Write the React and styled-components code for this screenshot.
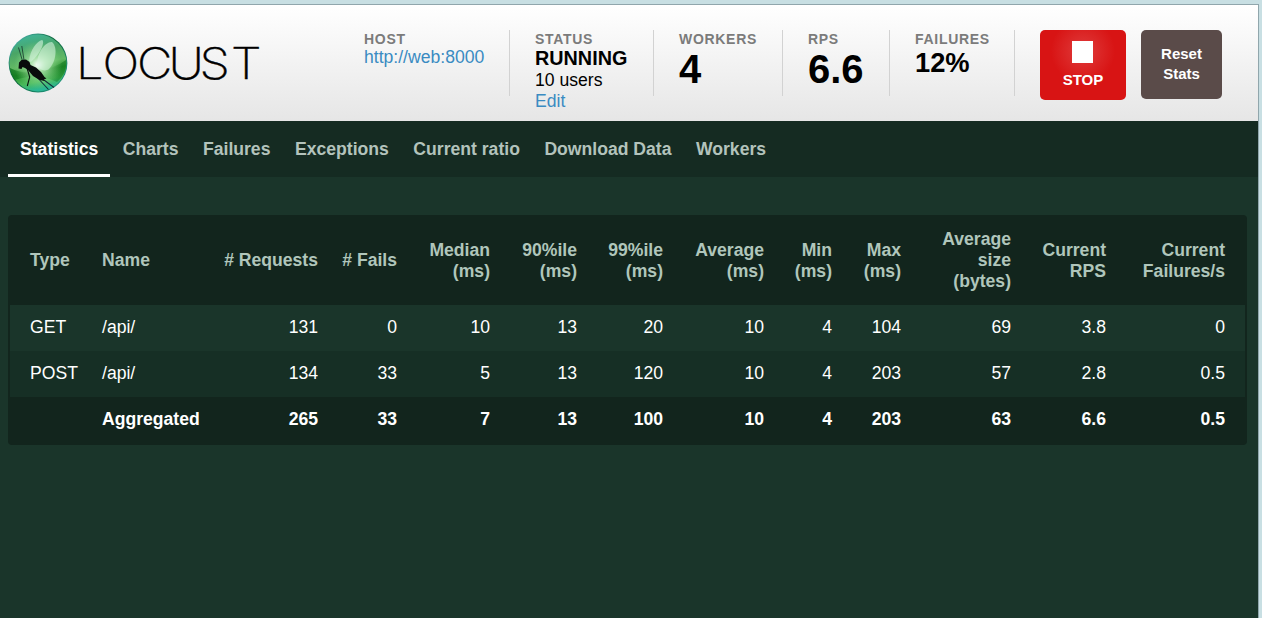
import React from "react";
import styled, { createGlobalStyle, css } from "styled-components";

const GlobalStyle = createGlobalStyle`
  * { box-sizing: border-box; }
  body {
    margin: 0;
    background: #c8dfe3;
    font-family: "Liberation Sans", Arial, sans-serif;
    font-size: 17.6px;
    line-height: 21px;
  }
`;

const Frame = styled.div`
  margin-top: 4px;
  width: 1259px;
  height: 614px;
  border-top: 1px solid #90a6ac;
  border-right: 1px solid #90a6ac;
  background: #1a352a;
  overflow: hidden;
`;

const Header = styled.header`
  display: flex;
  align-items: flex-start;
  height: 116px;
  padding: 25px 36px 0 4px;
  background: linear-gradient(#ffffff, #e6e6e6);
`;

const Logo = styled.svg`
  display: block;
  flex: none;
  width: 260px;
  height: 70px;
  margin-top: -2px;
`;

const Wordmark = styled.text`
  font-family: Inter, "Liberation Sans", sans-serif;
  font-size: 43.5px;
  font-weight: 200;
  fill: #000;
  stroke: #000;
  stroke-width: 0.4px;
`;

const Stats = styled.div`
  display: flex;
  margin-left: 75px;
`;

const Stat = styled.div`
  width: ${(p) => p.$width}px;
  height: 66px;
  padding-left: 25px;
  border-right: 1px solid #d2d2d2;
  color: #000;
  white-space: nowrap;
`;

const Label = styled.div`
  height: 17px;
  font-size: 14px;
  line-height: 18px;
  font-weight: bold;
  letter-spacing: 0.7px;
  color: #7b7b7b;
`;

const Value = styled.div`
  font-size: ${(p) => p.$size}px;
  line-height: ${(p) => p.$line}px;
  font-weight: bold;
`;

const Link = styled.a`
  display: block;
  color: #3a8bc2;
  text-decoration: none;
`;

const button = css`
  display: flex;
  flex-direction: column;
  align-items: center;
  border: 0;
  border-radius: 5px;
  color: #fff;
  font: bold 15px/20px "Liberation Sans", Arial, sans-serif;
`;

const StopButton = styled.button`
  ${button}
  width: 86px;
  height: 70px;
  margin-left: 25px;
  padding: 11px 0 0;
  background: radial-gradient(circle at 50% 30%, #e03c3c 0, #d81414 32px);
`;

const StopIcon = styled.span`
  width: 21px;
  height: 22px;
  margin: 0 1px 7px 0;
  background: #fff;
`;

const ResetButton = styled.button`
  ${button}
  width: 81px;
  height: 69px;
  margin-left: 15px;
  padding: 14px 16px 0;
  background: #5a4b49;
`;

const Nav = styled.nav`
  display: flex;
  height: 56px;
  padding-left: 8px;
  background: #152b22;
`;

const Tab = styled.a`
  height: 56px;
  margin-right: 0.5px;
  padding: 18px 12px 0;
  border-bottom: 3px solid ${(p) => (p.$active ? "#fff" : "transparent")};
  color: ${(p) => (p.$active ? "#fff" : "#b3c3bc")};
  font-weight: bold;
  white-space: nowrap;
`;

const Panel = styled.main`
  width: 1239px;
  height: 230px;
  margin: 38px 0 0 8px;
  padding: 2px;
  border-radius: 4px;
  background: #12251d;
`;

const Table = styled.table`
  width: 1235px;
  table-layout: fixed;
  border-collapse: collapse;
`;

const Col = styled.col`
  width: ${(p) => p.$width}px;
`;

const cell = css`
  padding: 0 12px;
  text-align: ${(p) => (p.$left ? "left" : "right")};
  &:first-child { padding-left: 20px; }
  &:last-child { padding-right: 20px; }
`;

const HeadCell = styled.th`
  ${cell}
  height: 88px;
  padding-bottom: 1px;
  color: #b0c6bb;
  vertical-align: middle;
  white-space: pre-line;
`;

const Row = styled.tr`
  height: 46px;
  color: #fff;
  background: ${(p) => p.$bg};
  font-weight: ${(p) => (p.$bold ? "bold" : "normal")};
`;

const Cell = styled.td`
  ${cell}
  padding-bottom: 2px;
`;

const tabs = ["Statistics", "Charts", "Failures", "Exceptions", "Current ratio", "Download Data", "Workers"];

const columns = [
  ["Type", 80],
  ["Name", 122],
  ["# Requests", 118],
  ["# Fails", 79],
  ["Median\n(ms)", 93],
  ["90%ile\n(ms)", 87],
  ["99%ile\n(ms)", 86],
  ["Average\n(ms)", 101],
  ["Min\n(ms)", 68],
  ["Max\n(ms)", 69],
  ["Average\nsize\n(bytes)", 110],
  ["Current\nRPS", 95],
  ["Current\nFailures/s", 127],
];

const rows = [
  { bg: "#1a352a", cells: ["GET", "/api/", "131", "0", "10", "13", "20", "10", "4", "104", "69", "3.8", "0"] },
  { bg: "#162f25", cells: ["POST", "/api/", "134", "33", "5", "13", "120", "10", "4", "203", "57", "2.8", "0.5"] },
  { bg: "#12251d", bold: true, cells: ["", "Aggregated", "265", "33", "7", "13", "100", "10", "4", "203", "63", "6.6", "0.5"] },
];

function LocustLogo() {
  return (
    <Logo viewBox="0 0 260 70" aria-label="Locust">
      <defs>
        <linearGradient id="rim" x1="0" y1="0" x2="1" y2="1">
          <stop offset="0" stopColor="#5cc8c8" />
          <stop offset="0.45" stopColor="#0c6538" />
          <stop offset="1" stopColor="#25a392" />
        </linearGradient>
        <linearGradient id="ball" x1="0.2" y1="0" x2="0.4" y2="1">
          <stop offset="0" stopColor="#3fb59c" />
          <stop offset="0.3" stopColor="#4aa566" />
          <stop offset="0.55" stopColor="#62b964" />
          <stop offset="0.68" stopColor="#2c9430" />
          <stop offset="0.85" stopColor="#48b858" />
          <stop offset="1" stopColor="#2ab796" />
        </linearGradient>
        <radialGradient id="glow" cx="0.5" cy="0.54" r="0.46">
          <stop offset="0" stopColor="#ffffff" />
          <stop offset="0.3" stopColor="#c6f2c4" stopOpacity="0.75" />
          <stop offset="1" stopColor="#8ee08c" stopOpacity="0" />
        </radialGradient>
        <linearGradient id="shade" x1="0" y1="0" x2="1" y2="0">
          <stop offset="0" stopColor="#087018" stopOpacity="0.75" />
          <stop offset="0.5" stopColor="#087018" stopOpacity="0.1" />
          <stop offset="1" stopColor="#087018" stopOpacity="0.55" />
        </linearGradient>
      </defs>
      <circle cx="34" cy="35" r="29.4" fill="url(#rim)" />
      <circle cx="34" cy="35" r="28.4" fill="url(#ball)" />
      <path d="M6 40Q20 47 34 43Q51 40 62 32Q63 46 53 54Q34 44 11 52Q6 46 6 40Z" fill="url(#shade)" />
      <circle cx="34" cy="35" r="26" fill="url(#glow)" />
      <path d="M25 33C26 22 33 13 38 12C41 13 38 24 27 34Z" fill="#d5f4dd" fillOpacity="0.6" />
      <path d="M33 38C32 25 42 13 48 14C54 19 52 34 45 41C41 44 36 42 33 38Z" fill="#d5f4dd" fillOpacity="0.6" />
      <path d="M18.5 33L14.5 19.5M20 32L17.8 18" stroke="#14352b" strokeWidth="0.8" fill="none" />
      <path d="M23 40L25.7 49L23.3 58" stroke="#08120e" strokeWidth="1.1" fill="none" />
      <path d="M31 47L44.5 61.5M36 49L50 59.5" stroke="#12303a" strokeWidth="1.1" fill="none" />
      <path d="M15 34.5L17.5 32L22 31.5L25.5 34L26.5 37L32 39.5L37 44L40.5 49L42.5 50.5L39.5 51.5L41 53L35.5 52L29 48L24 42L21 40L18.5 39L17.5 41L14.5 40.5Z" fill="#080c0b" />
      <Wordmark
        transform="scale(1.12 1)"
        x="64.4 87.9 118.8 146.9 174.6 202.7"
        y="50.8"
      >
        LOCUST
      </Wordmark>
    </Logo>
  );
}

export default function App() {
  return (
    <>
      <GlobalStyle />
      <Frame>
        <Header>
          <LocustLogo />
          <Stats>
            <Stat $width={171}>
              <Label>HOST</Label>
              <Link>http://web:8000</Link>
            </Stat>
            <Stat $width={144}>
              <Label>STATUS</Label>
              <Value $size={19.8} $line={23}>RUNNING</Value>
              <div>10 users</div>
              <Link>Edit</Link>
            </Stat>
            <Stat $width={129}>
              <Label>WORKERS</Label>
              <Value $size={40} $line={44}>4</Value>
            </Stat>
            <Stat $width={107}>
              <Label>RPS</Label>
              <Value $size={40} $line={44}>6.6</Value>
            </Stat>
            <Stat $width={125}>
              <Label>FAILURES</Label>
              <Value $size={27.3} $line={32}>12%</Value>
            </Stat>
          </Stats>
          <StopButton>
            <StopIcon />
            STOP
          </StopButton>
          <ResetButton>Reset Stats</ResetButton>
        </Header>
        <Nav>
          {tabs.map((name, i) => (
            <Tab key={name} $active={i === 0}>{name}</Tab>
          ))}
        </Nav>
        <Panel>
          <Table>
            <colgroup>
              {columns.map(([title, width]) => <Col key={title} $width={width} />)}
            </colgroup>
            <thead>
              <tr>
                {columns.map(([title], i) => <HeadCell key={title} $left={i < 2}>{title}</HeadCell>)}
              </tr>
            </thead>
            <tbody>
              {rows.map((row, r) => (
                <Row key={r} $bg={row.bg} $bold={row.bold}>
                  {row.cells.map((text, i) => <Cell key={i} $left={i < 2}>{text}</Cell>)}
                </Row>
              ))}
            </tbody>
          </Table>
        </Panel>
      </Frame>
    </>
  );
}
